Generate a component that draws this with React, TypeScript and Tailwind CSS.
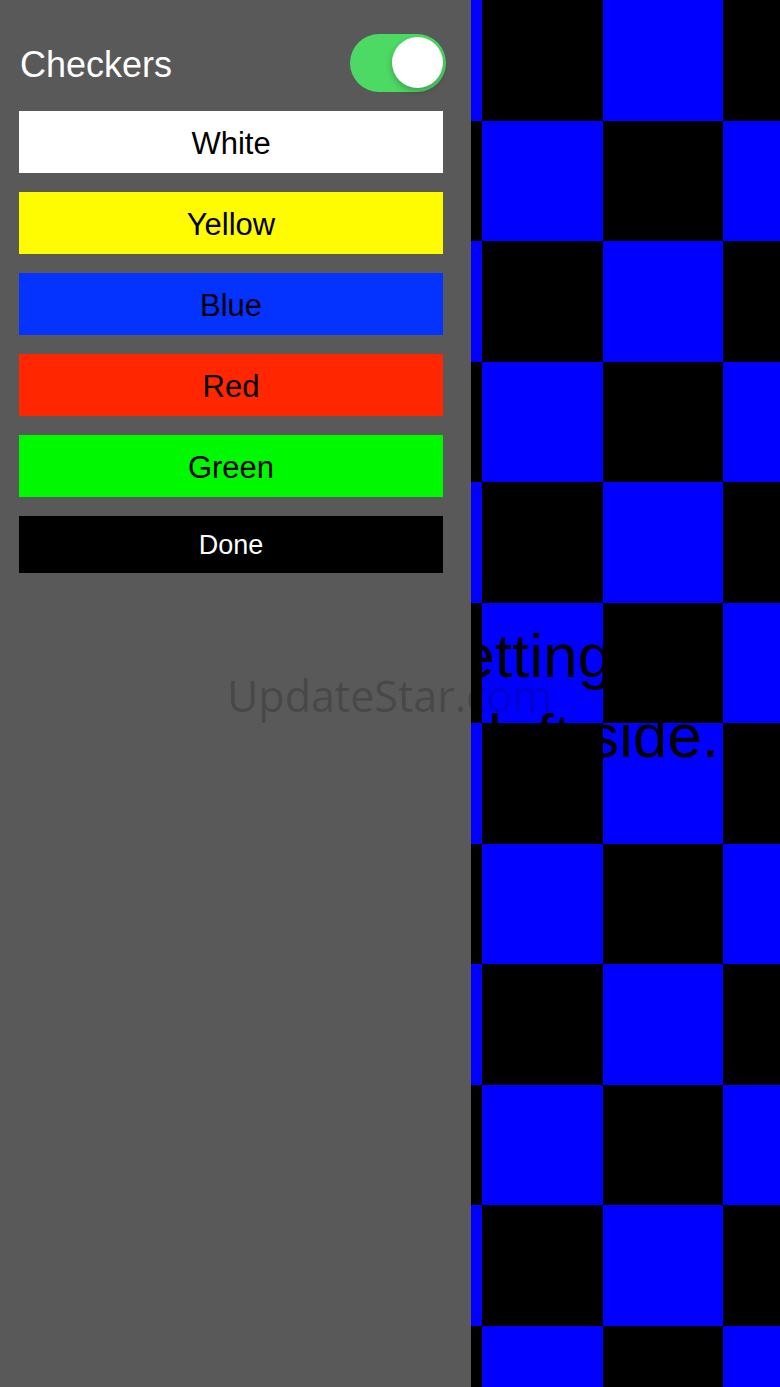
import React from 'react';

const buttons = [
  { label: 'White', cls: 'bg-white text-black' },
  { label: 'Yellow', cls: 'bg-[#fffb00] text-black' },
  { label: 'Blue', cls: 'bg-[#0433ff] text-black' },
  { label: 'Red', cls: 'bg-[#ff2600] text-black' },
  { label: 'Green', cls: 'bg-[#00f900] text-black' },
];

const ROWS = 12;
const COLS = 4;

function Checkerboard() {
  const cells = [];
  for (let r = 0; r < ROWS; r++) {
    for (let c = 0; c < COLS; c++) {
      cells.push(
        <div
          key={`${r}-${c}`}
          className={(r + c) % 2 === 0 ? 'bg-[#0000ff]' : 'bg-black'}
        />
      );
    }
  }
  return (
    <div className="grid grid-cols-[repeat(4,120.5px)] auto-rows-[120.5px] -ml-[109.5px] w-[482px]">
      {cells}
    </div>
  );
}

function Toggle() {
  return (
    <div className="relative h-[58px] w-[96px] mr-[1px] rounded-full bg-[#4cd964]">
      <div className="absolute right-[3px] top-[3px] h-[51px] w-[51px] rounded-full bg-white shadow-[0_3px_6px_rgba(0,0,0,0.25)]" />
    </div>
  );
}

export default function App() {
  return (
    <div
      className="relative flex h-[1387px] w-[780px] overflow-hidden bg-black"
      style={{ fontFamily: '"Liberation Sans", Arial, sans-serif' }}
    >
      {/* settings panel */}
      <div className="flex w-[471px] shrink-0 flex-col gap-[19px] bg-[#595959] pl-[19px] pt-[34px]">
        <div className="flex h-[58px] w-[428px] items-center justify-between">
          <span className="pl-[1px] pt-[3px] text-[36px] leading-none text-white">Checkers</span>
          <Toggle />
        </div>
        {buttons.map((b) => (
          <div
            key={b.label}
            className={`flex h-[62px] w-[424px] items-center justify-center pt-[3px] text-[31px] leading-none ${b.cls}`}
          >
            {b.label}
          </div>
        ))}
        <div className="flex h-[57px] w-[424px] items-center justify-center bg-black pt-[2px] text-[27px] leading-none text-white">
          Done
        </div>
      </div>

      {/* checker canvas */}
      <div className="relative flex-1 overflow-hidden">
        <Checkerboard />
        <div className="absolute right-[168px] top-[625px] whitespace-nowrap text-right text-[62px] leading-none text-black">
          Change the setting
        </div>
        <div className="absolute right-[61px] top-[705px] whitespace-nowrap text-right text-[62px] leading-none text-black">
          on the left side.
        </div>
      </div>

      {/* watermark */}
      <div
        className="pointer-events-none absolute left-[227px] top-[674px] whitespace-nowrap text-[43px] leading-none text-[rgba(0,0,0,0.2)]"
        style={{ fontFamily: '"Open Sans", sans-serif' }}
      >
        UpdateStar.com
      </div>
    </div>
  );
}
